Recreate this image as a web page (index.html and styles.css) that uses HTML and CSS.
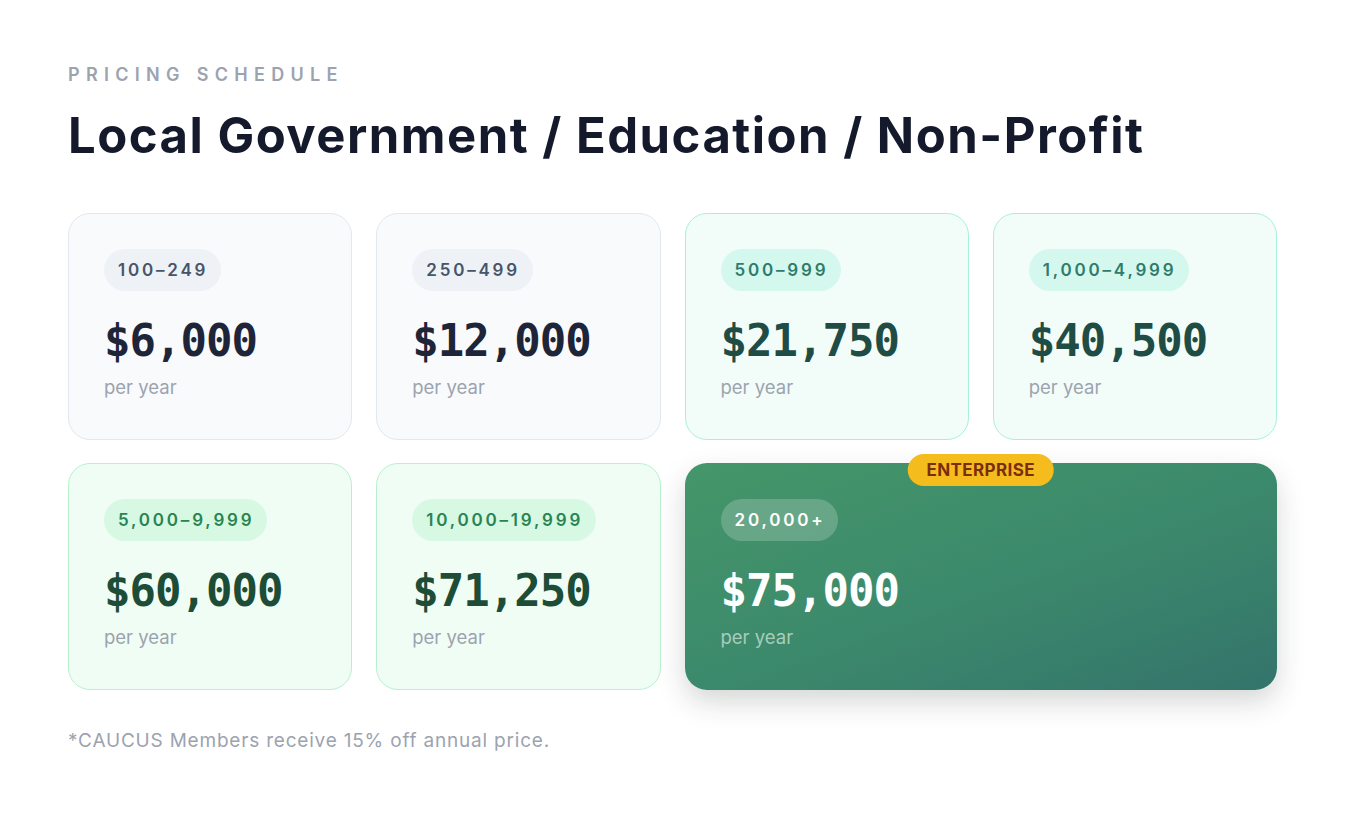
FILE: index.html
```html
<!DOCTYPE html>
<html lang="en">
<head>
<meta charset="utf-8">
<title>Pricing Schedule</title>
<link rel="stylesheet" href="styles.css">
</head>
<body>
<main class="page">
  <p class="eyebrow">PRICING SCHEDULE</p>
  <h1 class="title">Local Government / Education / Non-Profit</h1>
  <section class="grid">
    <div class="card slate">
      <span class="badge">100–249</span>
      <div class="price">$6,000</div>
      <div class="per">per year</div>
    </div>
    <div class="card slate">
      <span class="badge">250–499</span>
      <div class="price">$12,000</div>
      <div class="per">per year</div>
    </div>
    <div class="card teal">
      <span class="badge">500–999</span>
      <div class="price">$21,750</div>
      <div class="per">per year</div>
    </div>
    <div class="card teal">
      <span class="badge">1,000–4,999</span>
      <div class="price">$40,500</div>
      <div class="per">per year</div>
    </div>
    <div class="card green">
      <span class="badge">5,000–9,999</span>
      <div class="price">$60,000</div>
      <div class="per">per year</div>
    </div>
    <div class="card green">
      <span class="badge">10,000–19,999</span>
      <div class="price">$71,250</div>
      <div class="per">per year</div>
    </div>
    <div class="card enterprise">
      <span class="flag">ENTERPRISE</span>
      <span class="badge">20,000+</span>
      <div class="price">$75,000</div>
      <div class="per">per year</div>
    </div>
  </section>
  <p class="note">*CAUCUS Members receive 15% off annual price.</p>
</main>
</body>
</html>
```

FILE: styles.css
```css
* { box-sizing: border-box; }
html, body { margin: 0; padding: 0; background: #ffffff; }
body {
  font-family: "Inter", "Noto Sans", "Liberation Sans", sans-serif;
  color: #111827;
}
.page {
  padding: 64px 69px 0 68px;
}
.eyebrow {
  margin: 0;
  font-size: 18px;
  font-weight: 600;
  letter-spacing: 6.3px;
  color: #9ca3af;
  line-height: 22px;
}
.title {
  margin: 22px 0 0 0;
  font-size: 49px;
  line-height: 56px;
  font-weight: 700;
  letter-spacing: 1.5px;
  color: #141a2b;
}
.grid {
  margin-top: 49px;
  display: grid;
  grid-template-columns: repeat(4, 1fr);
  column-gap: 24px;
  row-gap: 23px;
}
.card {
  position: relative;
  height: 227px;
  border-radius: 22px;
  border: 1px solid #e2e8f0;
  padding: 35px 35px 0 35px;
  display: flex;
  flex-direction: column;
  align-items: flex-start;
}
.badge {
  display: inline-block;
  height: 42px;
  line-height: 42px;
  padding: 0 13px 0 14px;
  border-radius: 21px;
  font-size: 17px;
  font-weight: 600;
  letter-spacing: 2.8px;
}
.price {
  margin-top: 24px;
  font-family: "DejaVu Sans Mono", "Liberation Mono", monospace;
  font-weight: 700;
  font-size: 44px;
  line-height: 52px;
  letter-spacing: -1px;
}
.per {
  margin-top: 8px;
  font-size: 18.5px;
  line-height: 24px;
  color: #9ca3af;
}
.slate { background: #f8fafc; border-color: #e2e8f0; }
.slate .badge { background: #eef2f7; color: #475569; }
.slate .price { color: #1e2538; }

.teal { background: #f2fdf9; border-color: #a9f0dc; }
.teal .badge { background: #d4f8ee; color: #2f7b6c; }
.teal .price { color: #1f4d46; }

.green { background: #effdf5; border-color: #b9f1cf; }
.green .badge { background: #d7f8e3; color: #2a8452; }
.green .price { color: #1d4d37; }

.enterprise {
  grid-column: span 2;
  border: 1px solid transparent;
  background: linear-gradient(160deg, #459669 0%, #3c8a6c 50%, #34746b 100%);
  background-origin: border-box;
  box-shadow: 0 12px 28px rgba(20, 40, 30, 0.18);
}
.enterprise .badge { background: rgba(255, 255, 255, 0.2); color: #ffffff; }
.enterprise .price { color: #ffffff; }
.enterprise .per { color: #a9cdbd; }
.flag {
  position: absolute;
  top: -10px;
  left: 50%;
  transform: translateX(-50%);
  height: 32px;
  line-height: 32px;
  padding: 0 19px;
  border-radius: 16px;
  background: #f5bc1e;
  color: #7a2e0e;
  font-size: 17px;
  font-weight: 700;
  letter-spacing: 0.4px;
  white-space: nowrap;
}
.note {
  margin: 39px 0 0 0;
  font-size: 19px;
  line-height: 24px;
  letter-spacing: 0.8px;
  color: #9ca3af;
}
```
